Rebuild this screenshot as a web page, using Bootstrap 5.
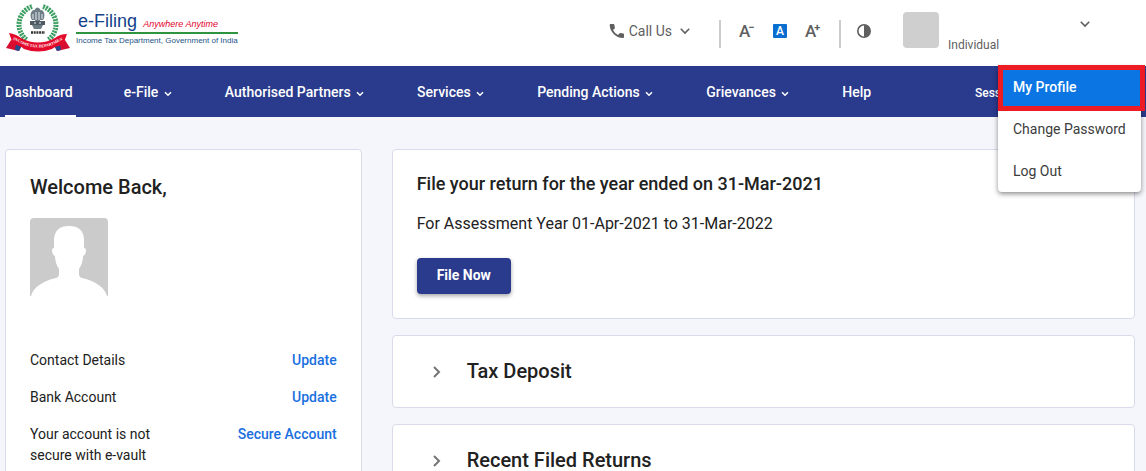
<!DOCTYPE html>
<html lang="en">
<head>
<meta charset="utf-8">
<meta name="viewport" content="width=device-width, initial-scale=1">
<title>e-Filing Dashboard</title>
<link href="https://cdn.jsdelivr.net/npm/bootstrap@5.3.0/dist/css/bootstrap.min.css" rel="stylesheet">
<style>
  body { font-family: Roboto, "Liberation Sans", sans-serif; font-size: 14px; line-height: 20px; color: #212121; background: #f5f6fb; }
  .site-header { height: 66px; background: #fff; color: #5f5f5f; }
  .brand { margin-left: 5px; gap: 5px; }
  .brand-text { font-family: "Liberation Sans", sans-serif; line-height: 14px; font-size: 8px; color: #1c5488; padding-top: 10px; }
  .brand-title { border-bottom: 2px solid #2f9440; height: 24px; line-height: 22px; padding-left: 2px; }
  .brand-title strong { font: 18px/22px "Liberation Sans", sans-serif; color: #14418b; margin-right: 4px; }
  .brand-title em { font-size: 9px; color: #e4002b; }
  .plain { background: none; border: 0; padding: 0; color: inherit; line-height: 20px; }
  .tools { gap: 18px; height: 62px; margin-right: 28px; }
  .call { margin-right: 11px; }
  .rule { width: 2px; height: 28px; background: #ccc; margin-top: 6px; }
  .size-btn { font-size: 17px; font-weight: 500; width: 16px; white-space: nowrap; text-align: left; }
  .size-btn sup { font-size: 11px; font-weight: 700; top: -6px; margin-left: -2px; }
  .size-btn.on { background: #0a6ed1; color: #fff; width: 14px; height: 14px; font-size: 12px; line-height: 14px; text-align: center; border-radius: 1px; }
  .contrast { width: 18px; margin-left: -2px; }
  .account { width: 243px; height: 66px; gap: 9px; padding-top: 12px; }
  .photo { width: 36px; height: 36px; border-radius: 4px; background: #cfcfcf; }
  .account-name { font-size: 12px; padding-top: 23px; }
  .account-toggle { margin: 0 56px 0 auto; height: 22px; }
  .account-menu { display: block; top: 66px; right: 5px; width: 143px; min-width: 0; padding: 0; border: 0; border-radius: 4px; box-shadow: 0 2px 5px rgba(0,0,0,.45); font-size: 14px; z-index: 20; }
  .account-menu .dropdown-item { padding: 11px 0 11px 15px; line-height: 20px; color: #3c3c3c; }
  .account-menu .dropdown-item.chosen { margin: -1px -4px -3px 0; width: 147px; padding: 7px 10px 9px; background: #0b76e3; color: #fff; font-weight: 500; border: 5px solid #ed1c24; height: 46px; }
  .main-nav { background: #2a3a8c; height: 51px; padding-left: 5px; }
  .main-nav .nav { gap: 48px; flex-wrap: nowrap; height: 51px; }
  .main-nav .nav-link { color: #fff; font-weight: 500; padding: 16px 3px 13px 0; height: 51px; line-height: 20px; white-space: nowrap; border-bottom: 2px solid transparent; }
  .main-nav .nav-link.active { border-color: #fff; }
  .main-nav .nav-link svg { margin: 1px 2px 0 2px; }
  .session { margin-left: auto; width: 171px; font-size: 12px; font-weight: 500; color: #fff; padding-top: 17px; white-space: nowrap; overflow: hidden; }
  .content { padding: 32px 11px 0 5px; overflow: hidden; }
  .content > .row { --bs-gutter-x: 30px; }
  .panel { background: #fff; border: 1px solid #d9dbea; border-radius: 4px; }
  .profile { padding: 24px; }
  h1, h2, h3 { font-weight: 500; margin: 0; }
  h1, h3 { font-size: 20px; line-height: 26px; }
  h2 { font-size: 18px; line-height: 24px; }
  .avatar { margin: 18px 0 54px; }
  .todo { margin-bottom: 16px; line-height: 21px; }
  .todo span { max-width: 140px; }
  .todo a { color: #1a6fe0; font-weight: 500; text-decoration: none; }
  .file-panel { padding: 22px 24px 24px; margin-bottom: 16px; }
  .file-panel p { font-size: 16px; line-height: 24px; margin: 16px 0 22px; }
  .file-btn, .file-btn:hover { background: #2a3a8c; color: #fff; }
  .file-btn { display: block; font-size: 14px; font-weight: 700; line-height: 20px; padding: 7px 20px 9px; border-radius: 4px; box-shadow: 0 2px 4px rgba(0,0,0,.35); }
  .fold { margin-bottom: 16px; }
  .fold button { padding: 22px 39px 23px; gap: 25px; width: 100%; text-align: left; }
</style>
</head>
<body>
<header class="site-header d-flex position-relative">
  <a href="#" class="brand d-flex text-decoration-none">
    <svg width="66" height="54" viewBox="0 0 66 54" role="img" aria-label="Income Tax Department emblem">
      <g fill="none" stroke="#359a5c">
        <path d="M27 6.500A19 19 0 0 0 22 40M38 6.500A19 19 0 0 1 43 40" stroke-width="5" stroke-dasharray="2 1"/>
        <path d="M27 6.500A19 19 0 0 0 22 40M38 6.500A19 19 0 0 1 43 40" stroke="#8ecba3" stroke-width="1" stroke-dasharray="1 2"/>
      </g>
      <g fill="#6d7c85">
        <path d="M30 9q2.500-3 5 0l1 4h-7z"/>
        <path d="M27 11q2-2 4 0v9h-4q-3-5 0-9zM34 11q2-2 4 0 3 4 0 9h-4z"/>
        <path d="M30 11h5v11h-5zM27 25h11l-2 4h-7z"/>
        <path d="M25 21h15v4H25z" fill="#4e5b64"/>
      </g>
      <path d="M31 12v8M34 12v8M28 14v5M37 14v5M29 23h2M34 23h2" stroke="#e8ecef" stroke-width="1"/>
      <path d="M26 32.500h14" stroke="#333" stroke-width="2.500" stroke-dasharray="2 .7"/>
      <path d="M6 40l-5 8 13 3 3-6zM60 40l5 8-13 3-3-6z" fill="#d50f2f"/>
      <path d="M11 44l6 1-3 6-4-1zM55 44l-6 1 3 6 4-1z" fill="#224b8f"/>
      <path d="M4 33q7 1 12 5 17 9 34 0 5-4 12-4l-4 11q-8 1-11 4-14 5-28 0-3-3-11-5z" fill="#e30b2c"/>
      <path id="bandline" d="M8 40q5 1 9 4 16 7 33 0 4-3 9-4" fill="none"/>
      <text font-family="Liberation Serif, serif" font-size="4" font-weight="700" fill="#fff"><textPath href="#bandline">INCOME TAX DEPARTMENT</textPath></text>
    </svg>
    <span class="brand-text text-nowrap">
      <span class="brand-title d-block"><strong>e-Filing</strong> <em>Anywhere Anytime</em></span>
      <span class="d-block">Income Tax Department, Government of India</span>
    </span>
  </a>
  <div class="tools d-flex align-items-center ms-auto">
    <button class="plain call d-flex align-items-center" type="button">
      <svg class="me-1" width="16" height="16" viewBox="0 0 16 16" fill="#5f5f5f" aria-hidden="true"><path d="M1.500 1h3q.8 0 .9.900.1 1.400.500 2.600.100.500-.2.900L4 7q1.600 3.300 5 5l1.700-1.700q.4-.3.900-.2 1.300.4 2.600.4.800.1.800.9V14q0 1-.9 1Q8.500 14.800 4.700 11 1 7.300.7 2 .7 1 1.500 1z"/></svg>
      Call Us
      <svg class="ms-2" width="10" height="8" viewBox="0 0 10 8" fill="none" stroke="#5f5f5f" stroke-width="1.600" aria-hidden="true"><path d="M.8 1.800 5 6l4.200-4.200"/></svg>
    </button>
    <span class="rule"></span>
    <button class="plain size-btn" type="button" aria-label="Smaller text">A<sup>−</sup></button>
    <button class="plain size-btn on" type="button" aria-label="Normal text">A</button>
    <button class="plain size-btn" type="button" aria-label="Larger text">A<sup>+</sup></button>
    <span class="rule"></span>
    <button class="plain contrast d-flex" type="button" aria-label="Contrast"><svg width="14" height="14" viewBox="0 0 14 14"><circle cx="7" cy="7" r="6.200" fill="none" stroke="#5f5f5f" stroke-width="1.600"/><path d="M7 1a6 6 0 0 1 0 12z" fill="#5f5f5f"/></svg></button>
  </div>
  <div class="account d-flex">
    <span class="photo"></span>
    <span class="account-name">Individual</span>
    <button class="plain account-toggle" type="button" aria-label="Account menu" aria-expanded="true"><svg width="10" height="8" viewBox="0 0 10 8" fill="none" stroke="#5f5f5f" stroke-width="1.600"><path d="M.8 1.800 5 6l4.200-4.200"/></svg></button>
  </div>
  <div class="account-menu dropdown-menu position-absolute">
    <a class="dropdown-item chosen" href="#">My Profile</a>
    <a class="dropdown-item" href="#">Change Password</a>
    <a class="dropdown-item" href="#">Log Out</a>
  </div>
</header>

<nav class="main-nav d-flex" aria-label="Main">
  <svg width="0" height="0" class="position-absolute"><symbol id="down" viewBox="0 0 8 6"><path d="M1 1.200 4 4.200l3-3" fill="none" stroke="#fff" stroke-width="1.500"/></symbol></svg>
  <div class="nav">
    <a class="nav-link active" href="#">Dashboard</a>
    <a class="nav-link" href="#">e-File <svg width="8" height="6"><use href="#down"/></svg></a>
    <a class="nav-link" href="#">Authorised Partners <svg width="8" height="6"><use href="#down"/></svg></a>
    <a class="nav-link" href="#">Services <svg width="8" height="6"><use href="#down"/></svg></a>
    <a class="nav-link" href="#">Pending Actions <svg width="8" height="6"><use href="#down"/></svg></a>
    <a class="nav-link" href="#">Grievances <svg width="8" height="6"><use href="#down"/></svg></a>
    <a class="nav-link" href="#">Help</a>
  </div>
  <span class="session">Sess</span>
</nav>

<main class="content">
  <div class="row">
    <div class="col-4 pb-3">
      <section class="panel profile h-100">
        <h1>Welcome Back,</h1>
        <svg class="avatar d-block" width="78" height="78" viewBox="0 0 78 78" role="img" aria-label="Profile photo">
          <path d="M4 0h70q4 0 4 4v74h-1C75 70 66 63 52 60q-3-1-3-4v-5q4-6 4-13 3-1 3-6 0-2-2-2v-9Q53 8 39 8T24 21v9q-2 0-2 2 0 5 3 6 0 7 4 13v5q0 3-3 4C12 63 3 70 1 78H0V4q0-4 4-4z" fill="#cbcbcb"/>
        </svg>
        <div class="todo d-flex justify-content-between"><span>Contact Details</span><a href="#">Update</a></div>
        <div class="todo d-flex justify-content-between"><span>Bank Account</span><a href="#">Update</a></div>
        <div class="todo d-flex justify-content-between mb-0"><span>Your account is not secure with e-vault</span><a href="#">Secure Account</a></div>
      </section>
    </div>
    <div class="col-8">
      <section class="panel file-panel">
        <h2>File your return for the year ended on 31-Mar-2021</h2>
        <p>For Assessment Year 01-Apr-2021 to 31-Mar-2022</p>
        <button class="btn file-btn border-0" type="button">File Now</button>
      </section>
      <section class="panel fold">
        <button class="plain d-flex align-items-center" type="button" aria-expanded="false"><svg width="10" height="14" viewBox="0 0 10 14" fill="none" stroke="#757575" stroke-width="2" aria-hidden="true"><path d="M2 3l5 5-5 5"/></svg><h3>Tax Deposit</h3></button>
      </section>
      <section class="panel fold">
        <button class="plain d-flex align-items-center" type="button" aria-expanded="false"><svg width="10" height="14" viewBox="0 0 10 14" fill="none" stroke="#757575" stroke-width="2" aria-hidden="true"><path d="M2 3l5 5-5 5"/></svg><h3>Recent Filed Returns</h3></button>
      </section>
    </div>
  </div>
</main>
<script src="https://cdn.jsdelivr.net/npm/bootstrap@5.3.0/dist/js/bootstrap.bundle.min.js"></script>
</body>
</html>
